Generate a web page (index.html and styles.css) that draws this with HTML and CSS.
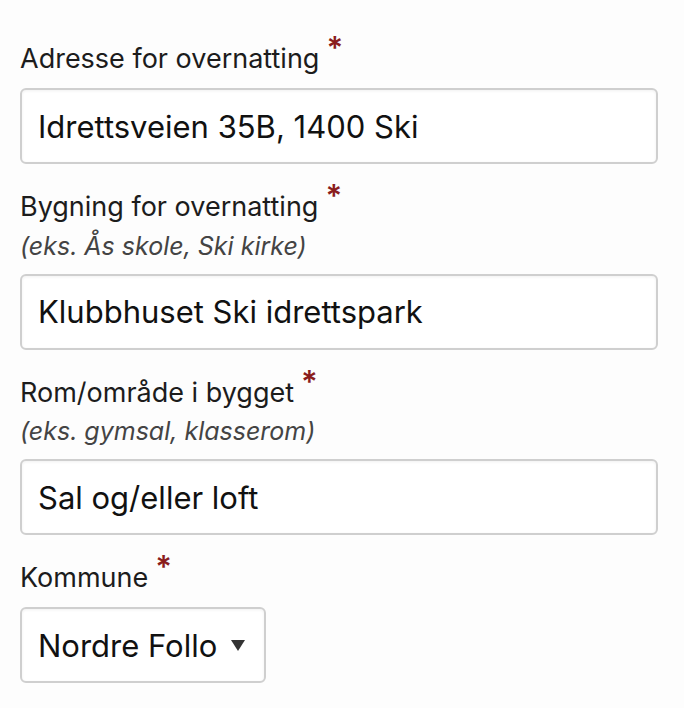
FILE: index.html
```html
<!DOCTYPE html>
<html lang="no">
<head>
    <meta charset="UTF-8">
    <meta name="viewport" content="width=device-width, initial-scale=1.0">
    <title>Overnatting</title>
    <link rel="stylesheet" href="styles.css">
</head>
<body>
    <form class="lodging-form">
        <div class="field">
            <label class="field-label" for="address">Adresse for overnatting<span class="required">*</span></label>
            <input class="text-input" type="text" id="address" value="Idrettsveien 35B, 1400 Ski">
        </div>

        <div class="field">
            <label class="field-label" for="building">Bygning for overnatting<span class="required">*</span></label>
            <div class="field-hint">(eks. Ås skole, Ski kirke)</div>
            <input class="text-input" type="text" id="building" value="Klubbhuset Ski idrettspark">
        </div>

        <div class="field">
            <label class="field-label" for="room">Rom/område i bygget<span class="required">*</span></label>
            <div class="field-hint">(eks. gymsal, klasserom)</div>
            <input class="text-input" type="text" id="room" value="Sal og/eller loft">
        </div>

        <div class="field">
            <label class="field-label" for="municipality">Kommune<span class="required">*</span></label>
            <div class="select-box">
                <select class="select-input" id="municipality">
                    <option>Nordre Follo</option>
                    <option>Ås</option>
                    <option>Frogn</option>
                    <option>Vestby</option>
                </select>
                <svg class="select-arrow" width="14" height="11" viewBox="0 0 14 11"><path d="M0 0h14L7 11z" fill="#333"/></svg>
            </div>
        </div>
    </form>
</body>
</html>
```

FILE: styles.css
```css
body { margin: 0; background: #fdfdfd; font-family: Inter, "Liberation Sans", sans-serif; color: #1c1c1c; }
.lodging-form { padding: 43px 26px 0 20px; }
.field { margin-bottom: 27px; }
.field-label { display: block; font-size: 27px; line-height: 31px; }
.required { position: relative; top: -9px; margin-left: 7px; color: #8a1d1d; font-size: 31px; font-weight: 600; line-height: 0; }
.field-hint { font-size: 25px; line-height: 28px; font-style: italic; color: #444; margin-top: 9.5px; }
.text-input, .select-box { margin-top: 14px; box-sizing: border-box; height: 76px; border: 2px solid #cfcfcf; border-radius: 6px; background: #fff; box-shadow: inset 0 1px 3px rgba(0,0,0,0.06); }
.text-input { display: block; width: 638px; padding: 0 16px; font-family: inherit; font-size: 31px; color: #111; outline: none; }
.select-box { display: inline-flex; align-items: center; gap: 13px; padding: 0 19px 0 16px; }
.select-input { appearance: none; -webkit-appearance: none; border: none; background: transparent; padding: 0; font-family: inherit; font-size: 31px; color: #111; outline: none; }
.select-arrow { display: block; }
```
